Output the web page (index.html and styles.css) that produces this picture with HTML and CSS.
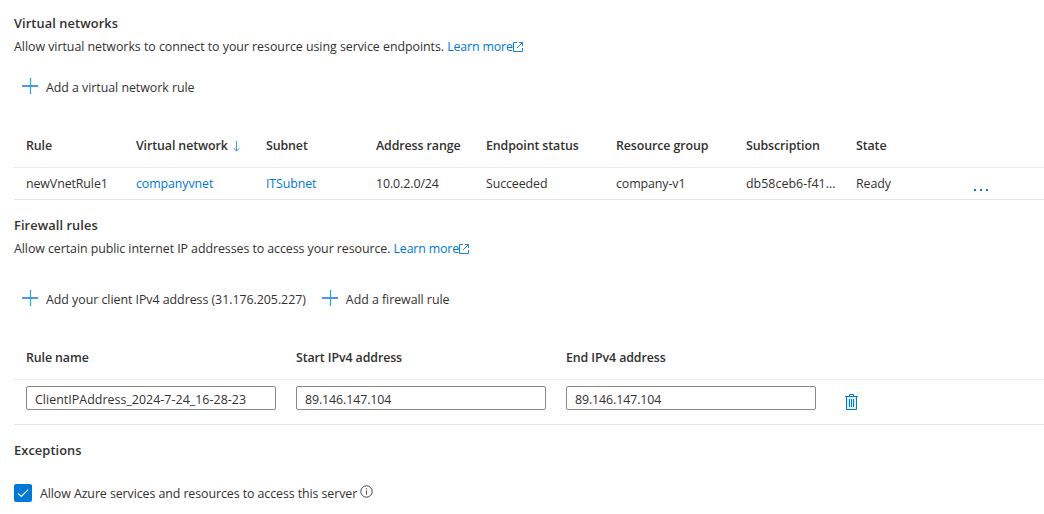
FILE: index.html
```html
<!DOCTYPE html>
<html lang="en">
<head>
<meta charset="utf-8">
<title>Networking</title>
<link rel="stylesheet" href="styles.css">
</head>
<body>
<svg class="defs" aria-hidden="true">
  <symbol id="plus" viewBox="0 0 16 16"><path d="M8.500 0V16" stroke="#30a5ea" stroke-width="1.300"/><path d="M0 8H16" stroke="#3a8edb" stroke-width="1.800"/></symbol>
  <symbol id="external" viewBox="0 0 10 10"><path d="M4 .5H.5V9.500H9.500V6M6 .5H9.500V4M9.300 .7L4 6" fill="none" stroke="#0078d4" stroke-width=".9"/></symbol>
</svg>
<main class="page">
  <section class="networks">
    <h2 class="title">Virtual networks</h2>
    <p class="intro"><span class="networks-copy">Allow virtual networks to connect to your resource using service endpoints.</span> <a class="link">Learn more<svg class="external"><use href="#external"/></svg></a></p>
    <div class="toolbar">
      <button class="command"><svg class="plus"><use href="#plus"/></svg><span>Add a virtual network rule</span></button>
    </div>
    <div class="grid grid-head">
      <span>Rule</span>
      <span class="sorted">Virtual network<svg class="sort" viewBox="0 0 7 11"><path d="M3.500 0V10M.7 7.300L3.500 10.200L6.300 7.300" fill="none" stroke="#3a96dd"/></svg></span>
      <span>Subnet</span><span>Address range</span><span>Endpoint status</span><span>Resource group</span><span>Subscription</span><span>State</span>
    </div>
    <div class="grid grid-row">
      <span>newVnetRule1</span><a class="link">companyvnet</a><a class="link">ITSubnet</a><span>10.0.2.0/24</span><span>Succeeded</span><span>company-v1</span><span class="subscription">db58ceb6-f41...</span><span>Ready</span>
      <svg class="more" viewBox="0 0 14 2"><path d="M0 0h2v2H0zM6 0h2v2H6zM12 0h2v2h-2z" fill="#0078d4"/></svg>
    </div>
  </section>
  <section class="firewall">
    <h2 class="title">Firewall rules</h2>
    <p class="intro"><span class="firewall-copy">Allow certain public internet IP addresses to access your resource.</span> <a class="link">Learn more<svg class="external"><use href="#external"/></svg></a></p>
    <div class="toolbar">
      <button class="command client"><svg class="plus"><use href="#plus"/></svg><span>Add your client IPv4 address (31.176.205.227)</span></button>
      <button class="command"><svg class="plus"><use href="#plus"/></svg><span>Add a firewall rule</span></button>
    </div>
    <div class="rules rules-head"><span>Rule name</span><span>Start IPv4 address</span><span>End IPv4 address</span></div>
    <div class="rules rules-row">
      <input class="field name" value="ClientIPAddress_2024-7-24_16-28-23">
      <input class="field" value="89.146.147.104">
      <input class="field" value="89.146.147.104">
      <svg class="trash" viewBox="0 0 13 16"><path d="M1.500 3H11.500V15.500H1.500Z" fill="#d9f0fa"/><path d="M0 2.500H13M4.500 2.500V.5H8.500V2.500M1.500 2.500V15.500H11.500V2.500M4.500 5V13M6.500 5V13M8.500 5V13" fill="none" stroke="#0078d4"/></svg>
    </div>
  </section>
  <section class="exceptions">
    <h2 class="title">Exceptions</h2>
    <label class="allow">
      <svg class="check" viewBox="0 0 18 18"><rect width="18" height="18" rx="2" fill="#0078d4"/><path d="M4 9.300L7.300 12.500L14.200 5.700" fill="none" stroke="#fff" stroke-width="1.100"/></svg>
      <span class="allow-copy">Allow Azure services and resources to access this server</span>
      <svg class="info" viewBox="0 0 13 13"><circle cx="6.500" cy="6.500" r="5.700" fill="none" stroke="#444"/><path d="M6.500 5.500V9.800M6.500 3.200V4.400" stroke="#555" stroke-width="1.100"/></svg>
    </label>
  </section>
</main>
</body>
</html>
```
FILE: styles.css
```css
* { box-sizing: border-box; }
body { margin: 0; background: #fff; color: #323130; font: 12.4px/18px "Open Sans", "Noto Sans", sans-serif; letter-spacing: -0.1px; }
.defs { position: absolute; width: 0; height: 0; }
.page { padding: 14px 0 0 14px; }
.title { margin: 0; font-size: 12.8px; line-height: 18px; font-weight: 600; letter-spacing: 0.1px; }
.intro { margin: 6px 0 0; height: 18px; white-space: pre; }
.networks-copy { letter-spacing: -0.035px; }
.firewall-copy { letter-spacing: -0.065px; }
.link { color: #0078d4; }
.intro .link { letter-spacing: -0.16px; }
.external { width: 10px; height: 10px; vertical-align: -1px; }
.toolbar { display: flex; gap: 16px; padding-left: 8px; margin-top: 22px; }
.command { display: flex; gap: 8px; padding: 0; border: 0; background: none; color: inherit; font: inherit; letter-spacing: -0.04px; white-space: nowrap; height: 20px; line-height: 20px; }
.plus { width: 16px; height: 16px; }
.grid { display: grid; grid-template-columns: 110px 130px 110px 110px 130px 130px 110px 118px 1fr; padding-left: 12px; white-space: nowrap; }
.grid-head { height: 43px; margin-top: 27px; padding-top: 12px; border-bottom: 1px solid #edebe9; font-weight: 600; }
.sorted { display: flex; align-items: center; gap: 5px; height: 18px; }
.sort { width: 7px; height: 11px; margin-top: 1px; }
.grid-row { height: 32px; padding-top: 7px; border-bottom: 1px solid #e4e4e4; }
.subscription { letter-spacing: 0.04px; }
.more { width: 14px; height: 2px; margin: 14px 0 0; }
.firewall { margin-top: 16px; }
.firewall .toolbar { margin-top: 32px; }
.rules { display: grid; grid-template-columns: 250px 250px 250px 14px; column-gap: 20px; padding-left: 12px; }
.rules-head { height: 43px; margin-top: 27px; padding-top: 12px; border-bottom: 1px solid #edebe9; font-weight: 600; }
.rules-row { height: 45px; padding-top: 6px; border-bottom: 1px solid #e4e4e4; }
.field { width: 250px; height: 24px; padding: 2px 8px 0; border: 1px solid #8a8886; border-radius: 2px; color: inherit; font: inherit; letter-spacing: inherit; }
.name { letter-spacing: 0.04px; }
.trash { width: 13px; height: 16px; margin: 8px 0 0 9px; }
.exceptions { margin-top: 16px; }
.allow { display: flex; align-items: center; margin-top: 24px; height: 20px; }
.check { width: 18px; height: 18px; }
.allow-copy { margin-left: 8px; padding-top: 2px; letter-spacing: -0.08px; }
.info { width: 13px; height: 13px; margin: -4px 0 0 3px; }
```
